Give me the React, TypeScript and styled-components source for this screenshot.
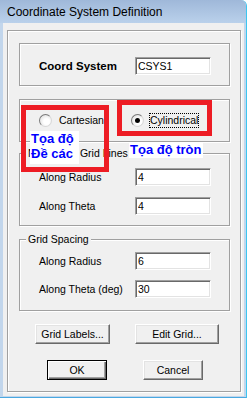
import React from "react";
import styled, { createGlobalStyle } from "styled-components";

const Global = createGlobalStyle`
  html, body { margin: 0; padding: 0; background: #ffffff; }
  body { font-family: "Liberation Sans", Arial, sans-serif; }
  * { box-sizing: border-box; }
`;

const Window = styled.div`
  position: relative;
  width: 247px;
  height: 398px;
  display: flex;
  flex-direction: column;
  background: #c2d6ec;
  border-right: 1px solid #3cc6f0;
  border-bottom: 1px solid #4aa8e0;
  border-top-right-radius: 6px;
  overflow: hidden;
`;

const TitleBar = styled.div`
  flex: none;
  height: 23px;
  display: flex;
  align-items: center;
  padding-left: 7px;
  background: linear-gradient(#9fb8d9, #bad1eb);
  font-family: "Liberation Sans", Arial, sans-serif;
  font-size: 12px;
  color: #000;
`;

const Client = styled.div`
  flex: 1;
  display: flex;
  flex-direction: column;
  margin: 0 2px 1px 3px;
  background: #f0f0f0;
  font-size: 10.5px;
  color: #000;
`;

const Etched = styled.div`
  position: relative;
  border: 1px solid #a0a0a0;
  box-shadow: inset 1px 1px 0 #ffffff, 1px 1px 0 #ffffff;
`;

const OuterBox = styled(Etched)`
  flex: 1;
  display: flex;
  flex-direction: column;
  margin: 7px 3px 4px 4px;
  padding: 12px 10px 0 11px;
`;

const CoordBox = styled(Etched)`
  height: 43px;
  display: flex;
  align-items: center;
  padding: 3px 0 0 19px;
`;

const BoldLabel = styled.span`
  width: 96px;
  font-size: 11.5px;
  font-weight: bold;
`;

const RadioBox = styled(Etched)`
  margin-top: 13px;
  height: 43px;
  display: flex;
  align-items: center;
  padding-left: 19px;
`;

const RadioOption = styled.label<{ $w?: number }>`
  display: flex;
  align-items: center;
  width: ${(p) => (p.$w ? `${p.$w}px` : "auto")};
  line-height: 13px;
`;

const RadioCircle = styled.span<{ $checked?: boolean }>`
  position: relative;
  width: 13px;
  height: 13px;
  border-radius: 50%;
  border: 1px solid;
  border-color: #7a7a7a #d8d8d8 #d8d8d8 #7a7a7a;
  background: radial-gradient(circle at 60% 60%, #ffffff 30%, #d6d6d6 100%);
  margin-right: ${(p) => (p.$checked ? "5px" : "6px")};
  &::after {
    content: "";
    display: ${(p) => (p.$checked ? "block" : "none")};
    position: absolute;
    left: 3px;
    top: 3px;
    width: 5px;
    height: 5px;
    border-radius: 50%;
    background: #000;
  }
`;

const RadioText = styled.span<{ $focus?: boolean }>`
  padding: 1px 1px;
  outline: ${(p) => (p.$focus ? "1px dotted #000" : "none")};
  outline-offset: -1px;
`;

const Group = styled(Etched)<{ $mt: number; $h: number; $pt: number; $gap: number }>`
  margin-top: ${(p) => p.$mt}px;
  height: ${(p) => p.$h}px;
  display: flex;
  flex-direction: column;
  gap: ${(p) => p.$gap}px;
  padding: ${(p) => p.$pt}px 0 0 19px;
`;

const Legend = styled.span`
  position: absolute;
  top: -7px;
  left: 6px;
  padding: 0 2px;
  line-height: 13px;
  background: #f0f0f0;
`;

const Row = styled.div`
  display: flex;
  align-items: center;
  height: 18px;
`;

const Label = styled.span`
  width: 96px;
`;

const TextInput = styled.input`
  width: 76px;
  height: 18px;
  margin: 0;
  padding: 0 0 0 2px;
  border: 1px solid;
  border-color: #a0a0a0 #ffffff #ffffff #a0a0a0;
  box-shadow: inset 1px 1px 0 #696969, inset -1px -1px 0 #e3e3e3;
  background: #ffffff;
  font-family: "Liberation Sans", Arial, sans-serif;
  font-size: 10.5px;
  color: #000;
  outline: none;
`;

const ButtonRow = styled.div<{ $mt: number; $ml: number; $gap: number }>`
  display: flex;
  margin-top: ${(p) => p.$mt}px;
  padding-left: ${(p) => p.$ml}px;
  gap: ${(p) => p.$gap}px;
`;

const Button = styled.button<{ $w: number; $default?: boolean }>`
  width: ${(p) => p.$w}px;
  height: 20px;
  margin: 0;
  padding: 0;
  background: #f0f0f0;
  font-family: "Liberation Sans", Arial, sans-serif;
  font-size: 10.5px;
  color: #000;
  border: 1px solid;
  border-color: ${(p) => (p.$default ? "#000" : "#ffffff #696969 #696969 #ffffff")};
  box-shadow: ${(p) =>
    p.$default
      ? "inset 1px 1px 0 #ffffff, inset -1px -1px 0 #696969, inset -2px -2px 0 #a0a0a0"
      : "inset -1px -1px 0 #a0a0a0, inset 1px 1px 0 #e3e3e3"};
`;

const RedFrame = styled.div<{ $x: number; $y: number; $w: number; $h: number }>`
  position: absolute;
  left: ${(p) => p.$x}px;
  top: ${(p) => p.$y}px;
  width: ${(p) => p.$w}px;
  height: ${(p) => p.$h}px;
  border: 5px solid #ed1c24;
  pointer-events: none;
`;

const Note = styled.div<{ $x: number; $y: number; $w: number; $h: number; $lh: number }>`
  position: absolute;
  left: ${(p) => p.$x}px;
  top: ${(p) => p.$y}px;
  width: ${(p) => p.$w}px;
  height: ${(p) => p.$h}px;
  padding-left: 1px;
  background: #ffffff;
  color: #0000ff;
  font-family: "Liberation Sans", Arial, sans-serif;
  font-size: 13px;
  font-weight: bold;
  line-height: ${(p) => p.$lh}px;
  white-space: nowrap;
`;

export default function App() {
  return (
    <>
      <Global />
      <Window>
        <TitleBar>Coordinate System Definition</TitleBar>
        <Client>
          <OuterBox>
            <CoordBox>
              <BoldLabel>Coord System</BoldLabel>
              <TextInput defaultValue="CSYS1" />
            </CoordBox>
            <RadioBox>
              <RadioOption $w={92}>
                <RadioCircle />
                <RadioText>Cartesian</RadioText>
              </RadioOption>
              <RadioOption>
                <RadioCircle $checked />
                <RadioText $focus>Cylindrical</RadioText>
              </RadioOption>
            </RadioBox>
            <Group $mt={11} $h={73} $pt={14} $gap={11}>
              <Legend>Number of Grid Lines</Legend>
              <Row>
                <Label>Along Radius</Label>
                <TextInput defaultValue="4" />
              </Row>
              <Row>
                <Label>Along Theta</Label>
                <TextInput defaultValue="4" />
              </Row>
            </Group>
            <Group $mt={13} $h={72} $pt={12} $gap={10}>
              <Legend>Grid Spacing</Legend>
              <Row>
                <Label>Along Radius</Label>
                <TextInput defaultValue="6" />
              </Row>
              <Row>
                <Label>Along Theta (deg)</Label>
                <TextInput defaultValue="30" />
              </Row>
            </Group>
            <ButtonRow $mt={13} $ml={16} $gap={25}>
              <Button $w={75}>Grid Labels...</Button>
              <Button $w={84}>Edit Grid...</Button>
            </ButtonRow>
            <ButtonRow $mt={16} $ml={28} $gap={36}>
              <Button $w={60} $default>OK</Button>
              <Button $w={60}>Cancel</Button>
            </ButtonRow>
          </OuterBox>
        </Client>
        <RedFrame $x={21} $y={105} $w={88} $h={67} />
        <RedFrame $x={117} $y={100} $w={95} $h={36} />
        <Note $x={30} $y={131} $w={49} $h={33} $lh={15}>
          Tọa độ
          <br />
          Đề các
        </Note>
        <Note $x={129} $y={143} $w={74} $h={15} $lh={13}>
          Tọa độ tròn
        </Note>
      </Window>
    </>
  );
}
